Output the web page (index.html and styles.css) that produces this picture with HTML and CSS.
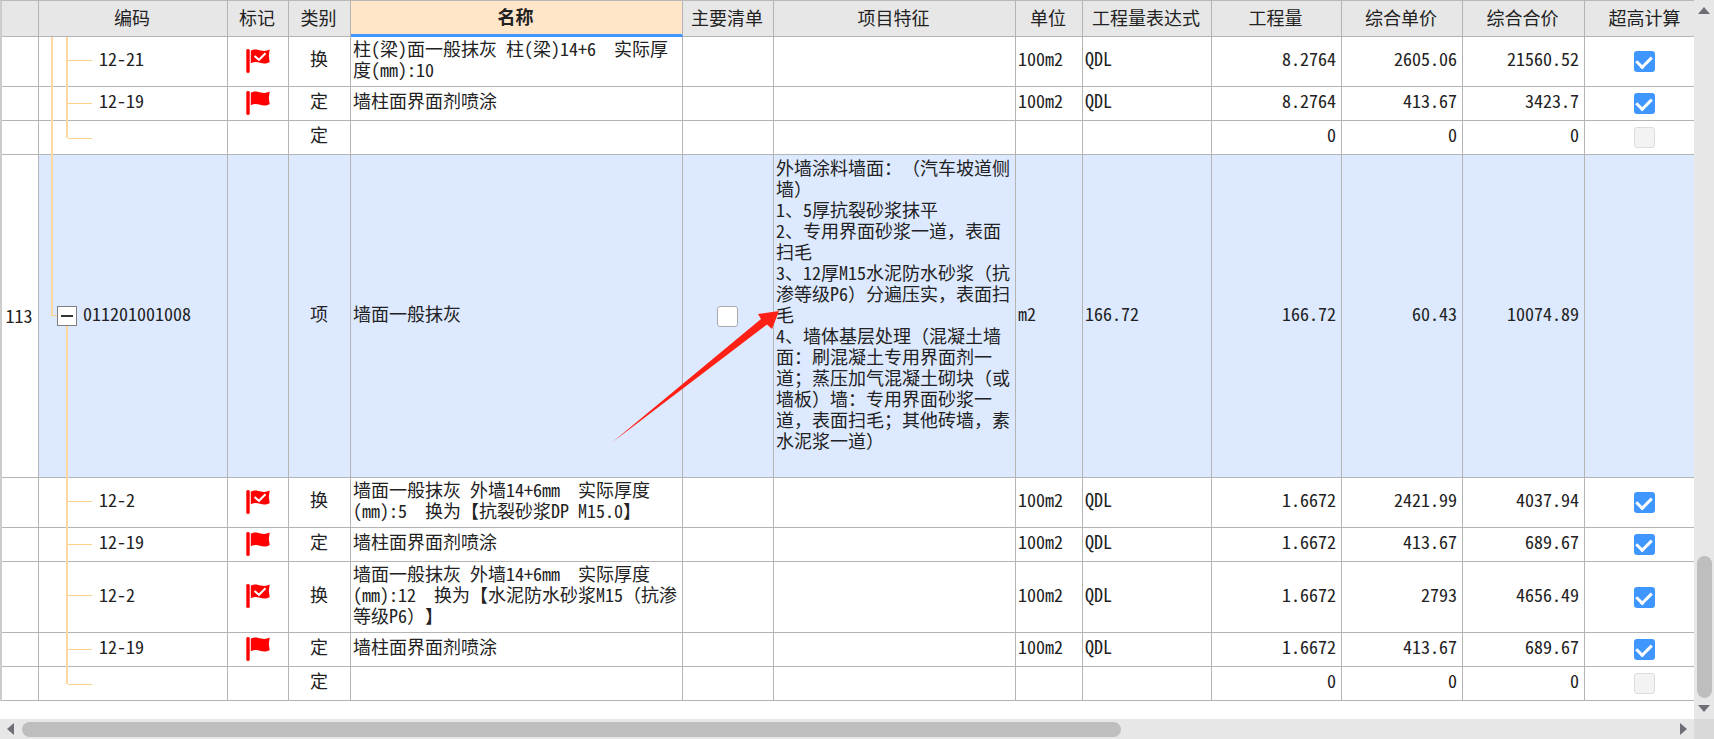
FILE: index.html
```
<!DOCTYPE html>
<html lang="zh-CN">
<head>
<meta charset="utf-8">
<title>工程量清单</title>
<link rel="stylesheet" href="styles.css">
</head>
<body>
<svg class="defs" aria-hidden="true">
  <symbol id="flag" viewBox="0 0 24 24">
    <path d="M0.3 0.8Q2 -0.6 3.7 0.8V23.2Q2 24.8 0.3 23.2Z" fill="#ff0000"/>
    <path d="M4.8 1.6C9 -0.6 12 0.8 15 1.6C18 2.4 21 2 23.7 0.6L22.8 7L23.7 13C20 15.2 17 14.8 14 13.8C11 12.8 8 12.6 4.8 14.2Z" fill="#ff0000"/>
  </symbol>
  <symbol id="flag-check" viewBox="0 0 24 24">
    <use href="#flag"/>
    <path d="M8.5 7L13 10.8L19.5 4.2" fill="none" stroke="#fff" stroke-width="2"/>
  </symbol>
</svg>
<main class="sheet">
  <div class="view">
    <table class="grid">
      <colgroup>
        <col class="c-no"><col class="c-code"><col class="c-mark"><col class="c-kind"><col class="c-name"><col class="c-main"><col class="c-feat"><col class="c-unit"><col class="c-expr"><col class="c-qty"><col class="c-price"><col class="c-total"><col class="c-high">
      </colgroup>
      <thead>
        <tr><th></th><th>编码</th><th>标记</th><th>类别</th><th class="sorted">名称</th><th>主要清单</th><th>项目特征</th><th>单位</th><th>工程量表达式</th><th>工程量</th><th>综合单价</th><th>综合合价</th><th>超高计算</th></tr>
      </thead>
      <tbody>
        <tr class="r2">
          <td></td><td class="code"><i class="trunk"></i><i class="branch"></i>12-21</td><td class="mid"><svg class="flag"><use href="#flag-check"/></svg></td><td class="mid">换</td><td class="name">柱(梁)面一般抹灰 柱(梁)14+6  实际厚度(mm):10</td><td></td><td></td><td>100m2</td><td>QDL</td><td class="num">8.2764</td><td class="num">2605.06</td><td class="num">21560.52</td><td class="mid box"><input type="checkbox" aria-label="超高计算" checked></td>
        </tr>
        <tr class="r1">
          <td></td><td class="code"><i class="trunk"></i><i class="branch"></i>12-19</td><td class="mid"><svg class="flag"><use href="#flag"/></svg></td><td class="mid">定</td><td class="name">墙柱面界面剂喷涂</td><td></td><td></td><td>100m2</td><td>QDL</td><td class="num">8.2764</td><td class="num">413.67</td><td class="num">3423.7</td><td class="mid box"><input type="checkbox" aria-label="超高计算" checked></td>
        </tr>
        <tr class="r1">
          <td></td><td class="code"><i class="trunk"></i><i class="branch last"></i></td><td></td><td class="mid">定</td><td></td><td></td><td></td><td></td><td></td><td class="num">0</td><td class="num">0</td><td class="num">0</td><td class="mid box"><input type="checkbox" aria-label="超高计算" disabled></td>
        </tr>
        <tr class="item">
          <td class="no">113</td><td class="code parent"><i class="trunk end"></i><i class="stem"></i><button class="toggle" type="button" aria-label="折叠"></button>011201001008</td><td></td><td class="mid">项</td><td class="name">墙面一般抹灰</td><td class="mid box"><input type="checkbox" aria-label="主要清单"></td><td class="feat">外墙涂料墙面：<span class="fw">（</span>汽车坡道侧墙<span class="fw">）</span>
1、5厚抗裂砂浆抹平
2、专用界面砂浆一道<span class="fw">，</span>表面扫毛
3、12厚M15水泥防水砂浆<span class="fw">（</span>抗渗等级P6<span class="fw">）</span>分遍压实<span class="fw">，</span>表面扫毛
4、墙体基层处理<span class="fw">（</span>混凝土墙面：刷混凝土专用界面剂一道；蒸压加气混凝土砌块<span class="fw">（</span>或墙板<span class="fw">）</span>墙：专用界面砂浆一道<span class="fw">，</span>表面扫毛；其他砖墙<span class="fw">，</span>素水泥浆一道<span class="fw">）</span></td><td>m2</td><td>166.72</td><td class="num">166.72</td><td class="num">60.43</td><td class="num">10074.89</td><td></td>
        </tr>
        <tr class="r2">
          <td></td><td class="code"><i class="branch"></i>12-2</td><td class="mid"><svg class="flag"><use href="#flag-check"/></svg></td><td class="mid">换</td><td class="name">墙面一般抹灰 外墙14+6mm  实际厚度(mm):5  换为【抗裂砂浆DP M15.0】</td><td></td><td></td><td>100m2</td><td>QDL</td><td class="num">1.6672</td><td class="num">2421.99</td><td class="num">4037.94</td><td class="mid box"><input type="checkbox" aria-label="超高计算" checked></td>
        </tr>
        <tr class="r1">
          <td></td><td class="code"><i class="branch"></i>12-19</td><td class="mid"><svg class="flag"><use href="#flag"/></svg></td><td class="mid">定</td><td class="name">墙柱面界面剂喷涂</td><td></td><td></td><td>100m2</td><td>QDL</td><td class="num">1.6672</td><td class="num">413.67</td><td class="num">689.67</td><td class="mid box"><input type="checkbox" aria-label="超高计算" checked></td>
        </tr>
        <tr class="r3">
          <td></td><td class="code"><i class="branch"></i>12-2</td><td class="mid"><svg class="flag"><use href="#flag-check"/></svg></td><td class="mid">换</td><td class="name">墙面一般抹灰 外墙14+6mm  实际厚度(mm):12  换为【水泥防水砂浆M15<span class="fw">（</span>抗渗等级P6<span class="fw">）</span>】</td><td></td><td></td><td>100m2</td><td>QDL</td><td class="num">1.6672</td><td class="num">2793</td><td class="num">4656.49</td><td class="mid box"><input type="checkbox" aria-label="超高计算" checked></td>
        </tr>
        <tr class="r1">
          <td></td><td class="code"><i class="branch"></i>12-19</td><td class="mid"><svg class="flag"><use href="#flag"/></svg></td><td class="mid">定</td><td class="name">墙柱面界面剂喷涂</td><td></td><td></td><td>100m2</td><td>QDL</td><td class="num">1.6672</td><td class="num">413.67</td><td class="num">689.67</td><td class="mid box"><input type="checkbox" aria-label="超高计算" checked></td>
        </tr>
        <tr class="r1">
          <td></td><td class="code"><i class="branch last"></i></td><td></td><td class="mid">定</td><td></td><td></td><td></td><td></td><td></td><td class="num">0</td><td class="num">0</td><td class="num">0</td><td class="mid box"><input type="checkbox" aria-label="超高计算" disabled></td>
        </tr>
      </tbody>
    </table>
    <svg class="arrow" viewBox="0 0 170 134" aria-hidden="true"><path d="M0 132.5L149 9L146 4L167 1L160 19L155 14.500Z" fill="#ff2015"/></svg>
  </div>
  <div class="vbar">
    <svg class="tip" viewBox="0 0 12 7"><path d="M0 7L6 0L12 7Z"/></svg>
    <div class="vtrack"><div class="vthumb"></div></div>
    <svg class="tip" viewBox="0 0 12 7"><path d="M0 0L6 7L12 0Z"/></svg>
  </div>
  <div class="hbar">
    <svg class="tip side" viewBox="0 0 7 12"><path d="M7 0L0 6L7 12Z"/></svg>
    <div class="htrack"><div class="hthumb"></div></div>
    <svg class="tip side" viewBox="0 0 7 12"><path d="M0 0L7 6L0 12Z"/></svg>
  </div>
  <div class="corner"></div>
</main>
</body>
</html>
```
FILE: styles.css
```
* { box-sizing: border-box; }
body {
  margin: 0;
  background: #fff;
  color: #222;
  font: 18px/21px "Noto Sans CJK SC", sans-serif;
  font-feature-settings: "hwid";
  text-spacing-trim: space-all;
}
.fw { font-feature-settings: normal; }
.defs { position: absolute; width: 0; height: 0; }
.sheet {
  display: grid;
  grid-template-columns: minmax(0, 1fr) 20px;
  grid-template-rows: minmax(0, 1fr) 20px;
  height: 100vh;
}
.view { position: relative; overflow: hidden; }

.grid {
  width: 100%;
  table-layout: fixed;
  border-collapse: separate;
  border-spacing: 0;
  border-top: 1px solid #b8b8b8;
  border-left: 2px solid #ccc;
}
.c-no { width: 37px; }
.c-code { width: 189px; }
.c-mark { width: 61px; }
.c-kind { width: 62px; }
.c-name { width: 332px; }
.c-main { width: 91px; }
.c-feat { width: 242px; }
.c-unit { width: 67px; }
.c-expr { width: 129px; }
.c-qty { width: 130px; }
.c-price { width: 121px; }
.c-total { width: 122px; }
th, td {
  position: relative;
  padding: 0 3px 6px 2px;
  border-right: 1px solid #b4b4b4;
  border-bottom: 1px solid #b4b4b4;
  text-align: left;
  vertical-align: middle;
}
th:last-child, td:last-child { padding-left: 12px; border-right: 0; }
th {
  height: 36px;
  padding: 0 2px 2px 0;
  background: #e7e7e7;
  font-weight: 400;
  text-align: center;
}
th.sorted {
  background: #ffe6c8;
  border-bottom: 3px solid #4096ff;
  font-weight: 700;
}
.r1 { height: 34px; }
.r2 { height: 50px; }
.r3 { height: 71px; }
.item { height: 323px; }
.item td { background: #dde9ff; }
.item .no { padding: 0 2px 2px 0; background: #fff; text-align: center; }
.mid { text-align: center; }
.mid:has(.flag) { padding-bottom: 2px; }
.mid.box { padding-bottom: 0; }
.num { padding-right: 5px; text-align: right; }
.name, .feat { white-space: pre-wrap; padding-right: 1px; }
.item .feat { padding-top: 2px; vertical-align: top; }

.code { padding-left: 60px; }
.code.parent { padding-left: 44px; }
.trunk, .branch, .stem { position: absolute; top: 0; bottom: -1px; z-index: 1; }
.trunk { left: 12px; border-left: 2px solid #ffd8a0; }
.trunk.end { bottom: 50%; width: 7px; border-bottom: 1px solid #ffcf8c; }
.stem { left: 27px; top: 50%; border-left: 2px solid #ffd8a0; }
.branch { left: 27px; width: 26px; border-left: 2px solid #ffd8a0; }
.branch::after {
  content: "";
  position: absolute;
  top: 46%;
  left: 0;
  right: 0;
  border-top: 1px solid #ffcf8c;
}
.branch.last { bottom: 50%; }
.branch.last::after { top: 100%; }
.toggle {
  position: absolute;
  left: 18px;
  top: 50%;
  z-index: 2;
  width: 20px;
  height: 20px;
  margin-top: -10px;
  padding: 0;
  border: 1px solid #808080;
  background: #fff;
}
.toggle::before {
  content: "";
  display: block;
  width: 12px;
  margin: auto;
  border-top: 2px solid #333;
}

.flag { display: block; width: 24px; height: 24px; margin: auto; }
input {
  appearance: none;
  display: grid;
  justify-content: center;
  width: 21px;
  height: 21px;
  margin: auto;
  border: 1px solid #aaa;
  border-radius: 3px;
  background: #fff;
}
input:checked { border: 0; padding-top: 2px; background: #4096ff; }
input:checked::before {
  content: "";
  width: 7px;
  height: 12px;
  border: solid #fff;
  border-width: 0 3px 3px 0;
  rotate: 45deg;
}
input:disabled { border-color: #dcdcdc; background: #f3f3f3; }

.arrow { position: absolute; left: 612px; top: 310px; width: 170px; height: 134px; }

.vbar, .hbar { display: flex; align-items: center; background: #e7e7e7; }
.vbar { flex-direction: column; padding: 7px 0; gap: 7px; }
.hbar { padding: 0 7px; gap: 8px; }
.tip { flex: none; width: 12px; height: 7px; fill: #6e6e76; }
.tip.side { width: 7px; height: 12px; }
.vtrack { display: flex; flex: 1; align-items: flex-end; }
.vthumb { width: 15px; height: 21%; border-radius: 8px; background: #bebebe; }
.htrack { flex: 1; }
.hthumb { width: 66.6%; height: 15px; border-radius: 8px; background: #bebebe; }
.corner { background: #d9d9d9; }
```
